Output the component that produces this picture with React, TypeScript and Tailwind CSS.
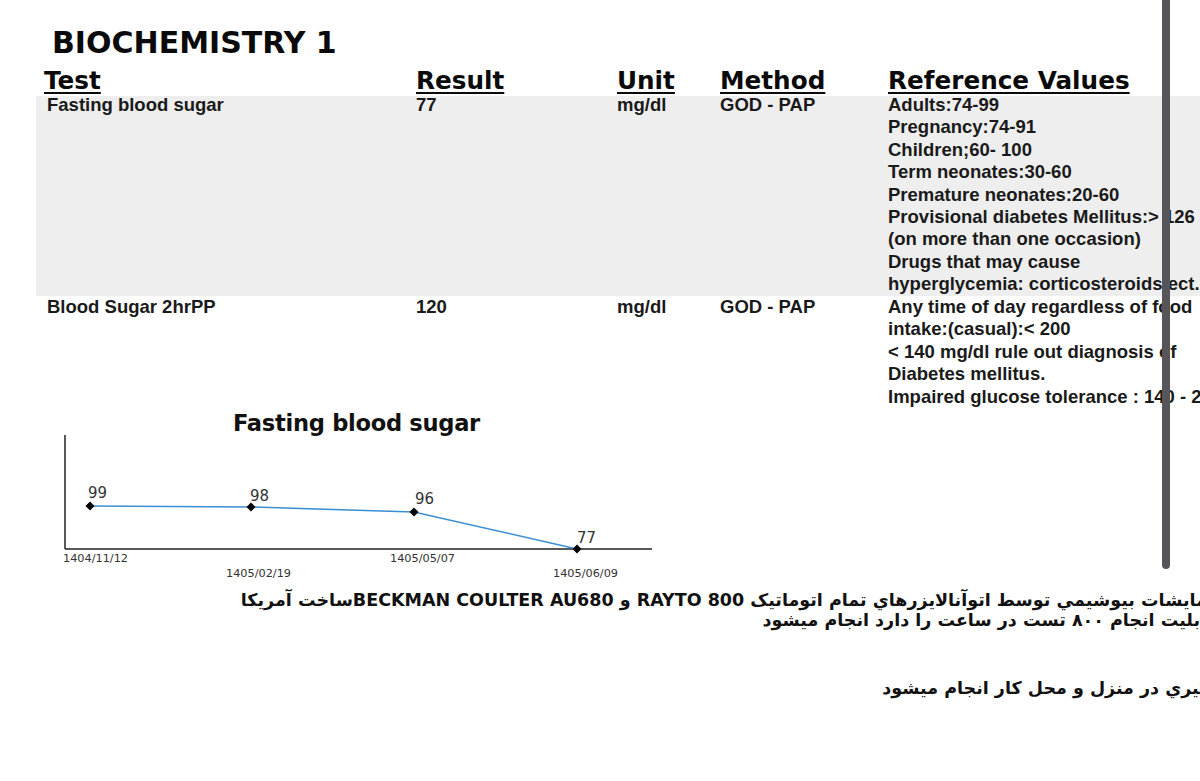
import React from 'react'

const head = "shrink-0 font-['DejaVu_Sans',sans-serif] font-bold text-[24.7px] leading-[26px] underline decoration-2 underline-offset-[3px]"
const cell = "shrink-0 font-['Liberation_Sans',Arial,sans-serif] font-bold text-[18.5px] leading-[22.4px] text-[#1a1a1a] whitespace-nowrap"

const fastingRef = [
  'Adults:74-99',
  'Pregnancy:74-91',
  'Children;60- 100',
  'Term neonates:30-60',
  'Premature neonates:20-60',
  'Provisional diabetes Mellitus:> 126',
  '(on more than one occasion)',
  'Drugs that may cause',
  'hyperglycemia: corticosteroids,ect..',
]

const ppRef = [
  'Any time of day regardless of food',
  'intake:(casual):< 200',
  '< 140 mg/dl rule out diagnosis of',
  'Diabetes mellitus.',
  'Impaired glucose tolerance : 140 - 200',
]

const points = [
  { x: 35, y: 76, v: '99', lx: 33, ly: 68, d: '1404/11/12', dx: 8, dy: 132 },
  { x: 196, y: 77, v: '98', lx: 195, ly: 71, d: '1405/02/19', dx: 171, dy: 147 },
  { x: 359, y: 82, v: '96', lx: 360, ly: 74, d: '1405/05/07', dx: 335, dy: 132 },
  { x: 522, y: 119, v: '77', lx: 522, ly: 113, d: '1405/06/09', dx: 498, dy: 147 },
]

function Row({ test, result, refs, className = '' }: { test: string; result: string; refs: string[]; className?: string }) {
  return (
    <div className={`flex ${className}`}>
      <div className={`${cell} w-[372px] pl-[3px]`}>{test}</div>
      <div className={`${cell} w-[201px]`}>{result}</div>
      <div className={`${cell} w-[103px]`}>mg/dl</div>
      <div className={`${cell} w-[168px]`}>GOD - PAP</div>
      <div className="flex flex-col shrink-0">
        {refs.map((r) => (
          <div key={r} className={cell}>{r}</div>
        ))}
      </div>
    </div>
  )
}

function Chart() {
  return (
    <div className="ml-[55px] w-[610px]">
      <div className="pl-[6px] w-[597px] mt-[4px] text-center font-['DejaVu_Sans',sans-serif] font-bold text-[22.6px] leading-[22px] tracking-[-0.3px] text-[#111]">
        Fasting blood sugar
      </div>
      <svg width="610" height="152" className="block -mt-[4px]">
        <line x1="10" y1="5" x2="10" y2="119" stroke="#222" strokeWidth="1.5" />
        <line x1="10" y1="119" x2="597" y2="119" stroke="#222" strokeWidth="1.5" />
        <polyline
          points={points.map((p) => `${p.x},${p.y}`).join(' ')}
          fill="none"
          stroke="#3b8fd4"
          strokeWidth="1.5"
        />
        {points.map((p) => (
          <g key={p.d}>
            <polygon
              points={`${p.x},${p.y - 4.5} ${p.x + 4.5},${p.y} ${p.x},${p.y + 4.5} ${p.x - 4.5},${p.y}`}
              fill="#000"
            />
            <text x={p.lx} y={p.ly} fontFamily="DejaVu Sans, sans-serif" fontSize="16" fill="#333" textLength="19" lengthAdjust="spacingAndGlyphs">
              {p.v}
            </text>
            <text x={p.dx} y={p.dy} fontFamily="DejaVu Sans, sans-serif" fontSize="10.5" fill="#333" textLength="65" lengthAdjust="spacingAndGlyphs">
              {p.d}
            </text>
          </g>
        ))}
      </svg>
    </div>
  )
}

export default function App() {
  return (
    <div className="relative w-[1200px] h-[781px] overflow-hidden bg-white text-black">
      <div className="pt-[25px]">
        <h1 className="pl-[52px] font-['DejaVu_Sans',sans-serif] font-bold text-[30px] leading-[36px] text-[#0a0a0a]">
          BIOCHEMISTRY 1
        </h1>

        <div className="flex pl-[44px] mt-[7px] text-[#0a0a0a]">
          <div className={`${head} w-[372px]`}>Test</div>
          <div className={`${head} w-[201px]`}>Result</div>
          <div className={`${head} w-[103px]`}>Unit</div>
          <div className={`${head} w-[168px]`}>Method</div>
          <div className={`${head} whitespace-nowrap`}>Reference Values</div>
        </div>

        <div className="flex flex-col h-[200px] ml-[36px] pl-[8px] bg-[#eeeeee] mt-[2px]">
          <Row test="Fasting blood sugar" result="77" refs={fastingRef} className="-mt-[2px]" />
        </div>
        <div className="pl-[44px]">
          <Row test="Blood Sugar 2hrPP" result="120" refs={ppRef} />
        </div>

        <div className="mt-[1px]">
          <Chart />
        </div>

        <div dir="rtl" className="mt-[8px] font-['DejaVu_Sans',sans-serif] font-bold text-[17.5px] leading-[20px] text-[#111] whitespace-nowrap">
          <p className="mr-[-23px]">آزمایشات بیوشیمي توسط اتوآنالایزرهاي تمام اتوماتیک RAYTO 800 و BECKMAN COULTER AU680ساخت آمریکا</p>
          <p className="mr-[-45px]">که قابلیت انجام  ۸۰۰ تست در ساعت را دارد انجام میشود</p>
          <p className="mr-[-62px] mt-[48px]">نمونه گیري در منزل و محل کار انجام میشود</p>
        </div>
      </div>

      <div className="absolute left-[1162px] top-0 w-[8px] h-[569px] rounded-b-full bg-[#56565a]" />
    </div>
  )
}
